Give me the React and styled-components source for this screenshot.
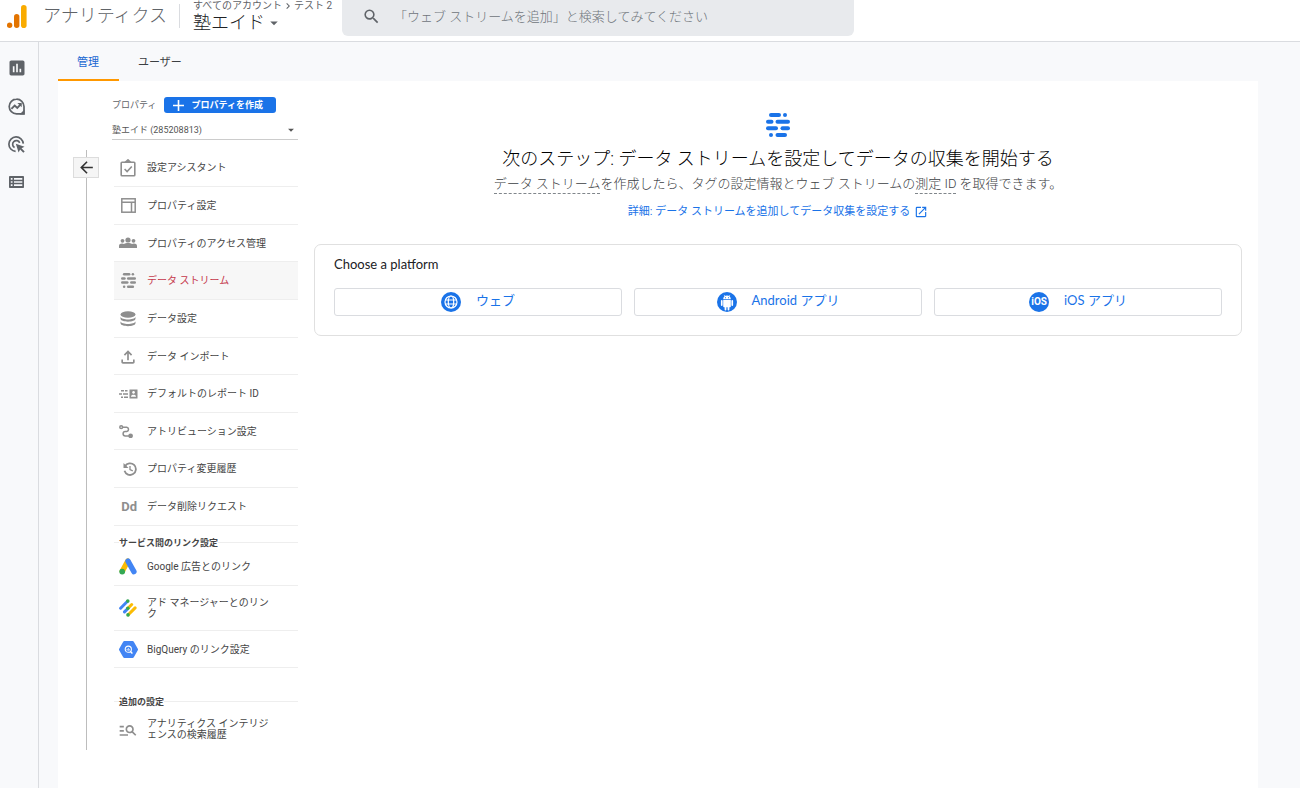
import React from "react";
import styled, { createGlobalStyle, css } from "styled-components";
import {
  MdArrowBack,
  MdArrowDropDown,
  MdChevronRight,
  MdInsertChart,
  MdManageSearch,
  MdOpenInNew,
  MdOutlineFileUpload,
  MdSearch,
} from "react-icons/md";

const StreamIcon = ({ size = 16 }) => (
  <svg width={size} height={size} viewBox="0 0 24 24" fill="currentColor">
    <rect x="3" y="0" width="12" height="4" rx="2" />
    <rect x="17" y="0" width="4" height="4" rx="2" />
    <rect x="0" y="6.7" width="7.5" height="4" rx="2" />
    <rect x="9.5" y="6.7" width="14.5" height="4" rx="2" />
    <rect x="0" y="13.3" width="12" height="4" rx="2" />
    <rect x="14.5" y="13.3" width="9.5" height="4" rx="2" />
    <rect x="3" y="20" width="4" height="4" rx="2" />
    <rect x="9.5" y="20" width="11.5" height="4" rx="2" />
  </svg>
);

const LogoIcon = () => (
  <svg width="20" height="24" viewBox="0 0 20 24">
    <circle cx="2.6" cy="21.2" r="2.7" fill="#e37400" />
    <rect x="7" y="10" width="5.4" height="14" rx="2.7" fill="#e37400" />
    <rect x="14" y="1" width="5.6" height="23" rx="2.8" fill="#f9ab00" />
  </svg>
);

const ExploreIcon = () => (
  <svg width="17" height="17" viewBox="0 0 17 17" fill="none" stroke="currentColor">
    <path d="M8.5 1.2a7.3 7.3 0 1 0 0 14.6H16V8.5A7.3 7.3 0 0 0 8.5 1.2Z" strokeWidth="1.7" />
    <path d="M3.4 10.8 6.7 7.5l2.6 2.4 3.6-3.7" strokeWidth="1.9" />
    <path d="M9.4 4.9h4.3v4.3Z" fill="currentColor" stroke="none" />
    <path d="M16.5 11.5v5h-5Z" fill="currentColor" stroke="none" />
  </svg>
);

const AdvertisingIcon = () => (
  <svg width="17" height="17" viewBox="0 0 17 17" fill="none" stroke="currentColor" strokeWidth="1.7">
    <path d="M7.6 15.3A7.2 7.2 0 1 1 15.3 7.600" />
    <path d="M6.600 11.600A3.700 3.700 0 1 1 11.700 6.800" />
    <path d="m7.800 7.800 8.700 2.900-3 1.500 3.200 3.200-1.400 1.400-3.200-3.200-1.500 3Z" fill="currentColor" stroke="none" />
  </svg>
);

const TableIcon = () => (
  <svg width="15" height="12" viewBox="0 0 15 12">
    <rect width="15" height="12" rx="0.8" fill="currentColor" />
    <path
      d="M1.8 2.1h1.7v1.6H1.8zM5 2.1h8.3v1.6H5zM1.8 5.2h1.7v1.6H1.8zM5 5.2h8.3v1.6H5zM1.8 8.3h1.7v1.6H1.8zM5 8.3h8.3v1.6H5z"
      fill="#f8f9fb"
    />
  </svg>
);

const AssistantIcon = () => (
  <svg width="16" height="18" viewBox="0 0 16 18" fill="none" stroke="currentColor" strokeWidth="1.6">
    <rect x="1.2" y="3.2" width="13.6" height="13.6" rx="0.8" />
    <path d="M5.5 3.2 8 .9l2.5 2.3Z" fill="currentColor" />
    <path d="m4.6 10 2.5 2.5 4.7-5" />
  </svg>
);

const PropertyIcon = () => (
  <svg width="15" height="15" viewBox="0 0 15 15" fill="none" stroke="currentColor" strokeWidth="1.5">
    <rect x="0.8" y="0.8" width="13.4" height="13.4" />
    <path d="M1 4.3h13M10.5 4.3V14" />
  </svg>
);

const GroupIcon = () => (
  <svg width="18" height="12" viewBox="0 0 18 12" fill="currentColor">
    <circle cx="3.5" cy="3.8" r="1.9" />
    <circle cx="9" cy="3" r="2.6" />
    <circle cx="14.5" cy="3.8" r="1.9" />
    <path d="M0 11V8.700c0-2.200 3.400-2.700 5-1.700 2-1.400 6-1.400 8 0 1.600-1 5-.5 5 1.700V11Z" />
  </svg>
);

const DatabaseIcon = () => (
  <svg width="16" height="16" viewBox="0 0 16 16" fill="currentColor">
    <ellipse cx="8" cy="3.5" rx="7.5" ry="3.2" />
    <path d="M.5 5.8c1 3.600 14 3.600 15 0v1.700c0 4.200-15 4.200-15 0Z" />
    <path d="M.5 10.300c1 3.600 14 3.600 15 0V12c0 4.200-15 4.200-15 0Z" />
  </svg>
);

const ReportIdIcon = () => (
  <svg width="19" height="10" viewBox="0 0 19 10" fill="currentColor">
    <path d="M2 1h3v1.6H2zM6 1h2.500v1.600H6zM0 4.200h3v1.600H0zM4 4.200h5v1.600H4zM2 7.500h2v1.600H2zM5 7.500h4v1.600H5z" />
    <path
      fillRule="evenodd"
      d="M10.5 .5h8v9h-8zM14.500 1.900a1.400 1.400 0 1 0 .1 0ZM12 7.800h5c0-2.600-5-2.600-5 0Z"
    />
  </svg>
);

const AttributionIcon = () => (
  <svg width="14" height="13" viewBox="0 0 14 13" fill="none" stroke="currentColor" strokeWidth="1.5">
    <circle cx="2.2" cy="2.2" r="1.4" />
    <path d="M3.8 2.2h4a2.2 2.2 0 0 1 0 4.3h-1.500a2.200 2.200 0 0 0 0 4.400h4" />
    <circle cx="11.6" cy="10.8" r="1.6" fill="currentColor" />
  </svg>
);

const HistoryIcon = () => (
  <svg width="14" height="14" viewBox="0 0 14 14" fill="none" stroke="currentColor" strokeWidth="1.8">
    <path d="M2 4.300A5.800 5.800 0 1 1 1.500 8.800" />
    <path d="M.5 1v5h5Z" fill="currentColor" stroke="none" />
    <path d="M7 4v3.500l2.800 1.400" strokeWidth="1.300" />
  </svg>
);

const AdsIcon = () => (
  <svg width="18" height="17" viewBox="0 0 18 17" strokeLinecap="round" strokeWidth="5.4">
    <path d="M8.7 3.2 3.4 13" stroke="#fbbc04" />
    <path d="M9 3.2 14.9 13.6" stroke="#4285f4" />
    <circle cx="3.2" cy="13.6" r="2.9" fill="#34a853" />
  </svg>
);

const AdManagerIcon = () => (
  <svg width="18" height="18" viewBox="0 0 18 18" strokeLinecap="round" strokeWidth="3">
    <path d="M1.6 9.2 8.5 2.3M5.5 12.9 8.8 9.6" stroke="#4285f4" />
    <path d="m9 9.3 3.7-3.8M9.3 15.8l6.8-6.9" stroke="#fbbc04" />
    <g fill="#34a853">
      <circle cx="8.8" cy="2.1" r="1.8" />
      <circle cx="8.8" cy="9.2" r="1.8" />
      <circle cx="9" cy="15.9" r="1.8" />
    </g>
  </svg>
);

const BigQueryIcon = () => (
  <svg width="19" height="17" viewBox="0 0 19 17">
    <path
      d="M5.4 0h8.2a1.5 1.5 0 0 1 1.2.7l4 7a1.5 1.5 0 0 1 0 1.6l-4 7a1.5 1.5 0 0 1-1.2.7H5.4a1.5 1.5 0 0 1-1.2-.7l-4-7a1.5 1.5 0 0 1 0-1.6l4-7A1.5 1.5 0 0 1 5.4 0Z"
      fill="#4285f4"
    />
    <circle cx="9.3" cy="8.2" r="3.1" fill="none" stroke="#fff" strokeWidth="1.1" />
    <path d="m11.5 10.5 1.9 2" stroke="#fff" strokeWidth="1.4" />
    <path d="M8.1 8v1.4M9.3 6.9v2.9M10.5 8.3v1.1" stroke="#fff" strokeWidth="0.8" />
  </svg>
);

const GlobeIcon = () => (
  <svg width="20" height="20" viewBox="0 0 20 20" fill="none" stroke="#fff" strokeWidth="1.2">
    <circle cx="10" cy="10" r="10" fill="#1a73e8" stroke="none" />
    <circle cx="10" cy="10" r="6" />
    <ellipse cx="10" cy="10" rx="2.7" ry="6" />
    <path d="M4.5 8h11M4.5 12h11" />
  </svg>
);

const AndroidIcon = () => (
  <svg width="20" height="20" viewBox="0 0 20 20" fill="#fff">
    <circle cx="10" cy="10" r="10" fill="#1a73e8" />
    <path d="M6.2 7.2a3.8 3.8 0 0 1 7.6 0ZM6.2 7.9h7.6v6.6a.8.8 0 0 1-.8.8h-.6v2.2a.9.9 0 0 1-1.8 0v-2.2h-1.2v2.2a.9.9 0 0 1-1.8 0v-2.2H7a.8.8 0 0 1-.8-.8Z" />
    <rect x="3.9" y="7.9" width="1.7" height="6" rx="0.85" />
    <rect x="14.4" y="7.9" width="1.7" height="6" rx="0.85" />
    <path d="m7 2.9 1.2 1.6M13 2.9l-1.2 1.6" stroke="#fff" strokeWidth="0.6" />
    <path d="M8 5.3h.9v.9H8zM11.1 5.3h.9v.9h-.9z" fill="#1a73e8" />
  </svg>
);

const propertyItems = [
  { label: "設定アシスタント", icon: <AssistantIcon />, tall: true },
  { label: "プロパティ設定", icon: <PropertyIcon />, tall: true },
  { label: "プロパティのアクセス管理", icon: <GroupIcon /> },
  { label: "データ ストリーム", icon: <StreamIcon size={15} />, tall: true, active: true },
  { label: "データ設定", icon: <DatabaseIcon />, tall: true },
  { label: "データ インポート", icon: <MdOutlineFileUpload size={20} /> },
  { label: "デフォルトのレポート ID", icon: <ReportIdIcon />, tall: true },
  { label: "アトリビューション設定", icon: <AttributionIcon />, align: "start" },
  { label: "プロパティ変更履歴", icon: <HistoryIcon />, tall: true, align: "end" },
  { label: "データ削除リクエスト", icon: <b>Dd</b>, tall: true, align: "end" },
];

const linkItems = [
  { label: "Google 広告とのリンク", icon: <AdsIcon />, tall: true },
  { label: "アド マネージャーとのリンク", icon: <AdManagerIcon /> },
  { label: "BigQuery のリンク設定", icon: <BigQueryIcon /> },
];

const extraItems = [
  { label: "アナリティクス インテリジェンスの検索履歴", icon: <MdManageSearch size={20} />, last: true },
];

const Menu = ({ items }) => (
  <MenuList>
    {items.map((item) => (
      <li key={item.label}>
        <MenuLink href="#" $active={item.active} $last={item.last}>
          <MenuIcon $tall={item.tall} $align={item.align}>
            {item.icon}
          </MenuIcon>
          <MenuLabel>{item.label}</MenuLabel>
        </MenuLink>
      </li>
    ))}
  </MenuList>
);

const App = () => {
  return (
    <Page>
      <GlobalStyle />
      <Header>
        <Brand href="#">
          <LogoIcon />
          アナリティクス
        </Brand>
        <Account>
          <Breadcrumb>
            すべてのアカウント
            <MdChevronRight size={12} />
            テスト 2
          </Breadcrumb>
          <AccountButton type="button">
            塾エイド
            <MdArrowDropDown size={18} />
          </AccountButton>
        </Account>
        <Search>
          <MdSearch size={19} />
          <input
            type="search"
            aria-label="検索"
            placeholder="「ウェブ ストリームを追加」と検索してみてください"
          />
        </Search>
      </Header>

      <Body>
        <Rail>
          <a href="#" aria-label="レポート">
            <MdInsertChart size={20} />
          </a>
          <a href="#" aria-label="探索">
            <ExploreIcon />
          </a>
          <a href="#" aria-label="広告">
            <AdvertisingIcon />
          </a>
          <a href="#" aria-label="設定">
            <TableIcon />
          </a>
        </Rail>

        <Content>
          <Tabs>
            <Tab type="button" $active>
              管理
            </Tab>
            <Tab type="button">ユーザー</Tab>
          </Tabs>

          <Panel>
            <BackColumn>
              <BackButton type="button" aria-label="戻る">
                <MdArrowBack size={19} />
              </BackButton>
            </BackColumn>

            <PropertyColumn>
              <PropertyHead>
                <label htmlFor="property">プロパティ</label>
                <CreateButton type="button">
                  <svg width="11" height="11" viewBox="0 0 11 11" stroke="#fff" strokeWidth="1.6">
                    <path d="M5.5 0v11M0 5.5h11" />
                  </svg>
                  プロパティを作成
                </CreateButton>
              </PropertyHead>
              <PropertySelect>
                <select id="property">
                  <option>塾エイド (285208813)</option>
                </select>
                <MdArrowDropDown size={14} />
              </PropertySelect>
              <Menu items={propertyItems} />
              <GroupTitle>サービス間のリンク設定</GroupTitle>
              <Menu items={linkItems} />
              <GroupTitle $spaced>追加の設定</GroupTitle>
              <Menu items={extraItems} />
            </PropertyColumn>

            <Main>
              <StreamIcon size={24} />
              <h1>次のステップ: データ ストリームを設定してデータの収集を開始する</h1>
              <p>
                <Term>データ ストリーム</Term>
                を作成したら、タグの設定情報とウェブ ストリームの
                <Term>測定 ID</Term> を取得できます。
              </p>
              <MoreLink href="#">
                詳細: データ ストリームを追加してデータ収集を設定する
                <MdOpenInNew size={14} />
              </MoreLink>
              <Card>
                <h2>Choose a platform</h2>
                <Platforms>
                  <PlatformButton type="button">
                    <GlobeIcon />
                    <span>ウェブ</span>
                  </PlatformButton>
                  <PlatformButton type="button">
                    <AndroidIcon />
                    <span>Android アプリ</span>
                  </PlatformButton>
                  <PlatformButton type="button">
                    <IosBadge>iOS</IosBadge>
                    <span>iOS アプリ</span>
                  </PlatformButton>
                </Platforms>
              </Card>
            </Main>
          </Panel>
        </Content>
      </Body>
    </Page>
  );
};

export default App;

const GlobalStyle = createGlobalStyle`
  * {
    box-sizing: border-box;
  }

  body {
    margin: 0;
    background: #f8f9fb;
    color: #202124;
    font-family: Roboto, "Noto Sans CJK JP", sans-serif;
    font-size: 10px;
  }

  h1, h2, h3, p, ul {
    margin: 0;
    padding: 0;
    font-weight: 400;
  }

  a {
    color: inherit;
    text-decoration: none;
  }

  button, input, select {
    font: inherit;
    color: inherit;
    padding: 0;
    border: none;
    background: none;
  }

  button {
    cursor: pointer;
  }

  svg {
    display: block;
    flex-shrink: 0;
  }
`;

const Page = styled.div`
  min-height: 100vh;
  display: flex;
  flex-direction: column;
`;

const Header = styled.header`
  display: flex;
  align-items: flex-start;
  background: #ffffff;
  border-bottom: 1px solid #dadce0;
  padding: 0 7px 5px;
`;

const Brand = styled.a`
  display: flex;
  align-items: center;
  gap: 16px;
  height: 24px;
  margin-top: 4px;
  padding-right: 12px;
  border-right: 1px solid #dadce0;
  font-size: 18px;
  font-weight: 300;
  line-height: 24px;
  white-space: nowrap;
  color: #5f6368;
`;

const Account = styled.div`
  width: 162px;
  flex-shrink: 0;
  padding-left: 13px;
`;

const Breadcrumb = styled.div`
  display: flex;
  align-items: center;
  line-height: 10px;
  white-space: nowrap;
  color: #5f6368;
`;

const AccountButton = styled.button`
  display: flex;
  align-items: center;
  font-size: 18px;
  font-weight: 300;
  line-height: 22px;

  svg {
    color: #5f6368;
  }
`;

const Search = styled.label`
  flex: 0 1 512px;
  display: flex;
  align-items: center;
  gap: 13px;
  height: 36px;
  padding: 0 20px 4px;
  border-radius: 0 0 6px 6px;
  background: #e8eaed;
  color: #5f6368;

  input {
    flex: 1;
    min-width: 0;
    font-size: 13px;
    font-weight: 300;
    outline: none;

    &::placeholder {
      color: #6f757b;
      opacity: 1;
    }
  }
`;

const Body = styled.div`
  flex: 1;
  display: flex;
`;

const Rail = styled.nav`
  width: 39px;
  flex-shrink: 0;
  display: flex;
  flex-direction: column;
  gap: 18px;
  padding: 16px 5px 0 0;
  border-right: 1px solid #dadce0;
  color: #5f6368;

  a {
    height: 20px;
    display: grid;
    place-items: center;
  }
`;

const Content = styled.div`
  flex: 1;
  min-width: 0;
  display: flex;
  flex-direction: column;
  padding: 0 42px 0 19px;
`;

const Tabs = styled.div`
  display: flex;
`;

const Tab = styled.button`
  height: 39px;
  padding: 0 20px 0 19px;
  font-size: 11px;
  border-bottom: 2px solid ${({ $active }) => ($active ? "#ff9800" : "transparent")};
  color: ${({ $active }) => ($active ? "#1967d2" : "#3c4043")};
`;

const Panel = styled.div`
  flex: 1;
  display: flex;
  background: #ffffff;
`;

const BackColumn = styled.div`
  width: 26px;
  height: 600px;
  flex-shrink: 0;
  margin: 69px 13px 0 15px;
  padding-top: 7px;
  background: linear-gradient(#bdbdbd, #bdbdbd) 13px 0 / 1px 100% no-repeat;
`;

const BackButton = styled.button`
  width: 26px;
  height: 21px;
  display: grid;
  place-items: center;
  border: 1px solid #dcdcdc;
  background: #f5f5f5;
  color: #333333;
`;

const PropertyColumn = styled.div`
  width: 186px;
  flex-shrink: 0;
  padding: 16px 0 20px;
  color: #444444;
`;

const PropertyHead = styled.div`
  display: flex;
  align-items: center;
  gap: 8px;
  font-size: 9px;
  line-height: 16px;
  color: #5f6368;
`;

const CreateButton = styled.button`
  width: 112px;
  height: 16px;
  display: flex;
  align-items: center;
  gap: 7px;
  padding-left: 9px;
  border-radius: 3px;
  background: #1a73e8;
  color: #ffffff;
  font-weight: 700;
  line-height: 16px;
  white-space: nowrap;
`;

const PropertySelect = styled.div`
  display: flex;
  align-items: center;
  height: 27px;
  padding-top: 8px;
  margin-bottom: 9px;
  border-bottom: 1px solid #cccccc;
  font-size: 9px;
  color: #555555;

  select {
    flex: 1;
    appearance: none;
    outline: none;
  }
`;

const MenuList = styled.ul`
  list-style: none;
  padding-left: 2px;
`;

const MenuLink = styled.a`
  display: flex;
  align-items: center;
  padding: 9px 20px 9px 5px;
  border-bottom: 1px solid #eeeeee;

  ${({ $active }) =>
    $active &&
    css`
      background: #f7f7f7;
      color: #c5374b;
    `}

  ${({ $last }) =>
    $last &&
    css`
      border-bottom: none;
    `}
`;

const MenuIcon = styled.span`
  width: 18px;
  height: ${({ $tall }) => ($tall ? 19 : 18)}px;
  flex-shrink: 0;
  display: grid;
  align-items: center;
  justify-content: ${({ $align }) => $align || "center"};
  margin-right: 10px;
  color: #8e8e8e;
  font-size: 13px;
`;

const MenuLabel = styled.span`
  padding: 2px 0;
  line-height: 11px;
`;

const GroupTitle = styled.h3`
  display: flex;
  align-items: center;
  height: 12px;
  margin: ${({ $spaced }) => ($spaced ? "27px" : "10px")} 0 0 2px;
  font-size: 9px;
  font-weight: 700;
  white-space: nowrap;

  &::before,
  &::after {
    content: "";
    width: 5px;
    height: 1px;
    background: #eeeeee;
  }

  &::after {
    flex: 1;
  }
`;

const Main = styled.main`
  flex: 1;
  min-width: 0;
  display: flex;
  flex-direction: column;
  align-items: center;
  padding: 32px 16px;
  color: #1a73e8;

  h1 {
    margin-top: 9px;
    font-size: 18px;
    font-weight: 300;
    line-height: 26px;
    color: #000000;
  }

  p {
    font-size: 13px;
    font-weight: 300;
    line-height: 24px;
    color: #3c4043;
  }
`;

const Term = styled.span`
  padding-bottom: 2px;
  border-bottom: 1px dashed #80868b;
`;

const MoreLink = styled.a`
  display: flex;
  align-items: center;
  gap: 4px;
  margin-top: 8px;
  font-size: 11px;
  line-height: 16px;
`;

const Card = styled.section`
  align-self: stretch;
  margin-top: 24px;
  padding: 9px 19px 19px;
  border: 1px solid #e0e0e0;
  border-radius: 7px;

  h2 {
    font-family: Lato, sans-serif;
    font-size: 13px;
    line-height: 20px;
    color: #202124;
  }
`;

const Platforms = styled.div`
  display: grid;
  grid-template-columns: repeat(3, 1fr);
  gap: 12px;
  margin-top: 14px;
`;

const PlatformButton = styled.button`
  height: 28px;
  display: flex;
  align-items: center;
  justify-content: center;
  gap: 15px;
  border: 1px solid #dadce0;
  border-radius: 3px;
  font-family: Lato, "Noto Sans CJK JP", sans-serif;
  font-size: 13px;
  line-height: 20px;
  color: #1a73e8;

  span {
    padding-bottom: 4px;
  }
`;

const IosBadge = styled.b`
  width: 20px;
  height: 20px;
  border-radius: 50%;
  background: #1a73e8;
  color: #ffffff;
  font-family: Roboto, sans-serif;
  font-size: 10px;
  text-align: center;
`;
